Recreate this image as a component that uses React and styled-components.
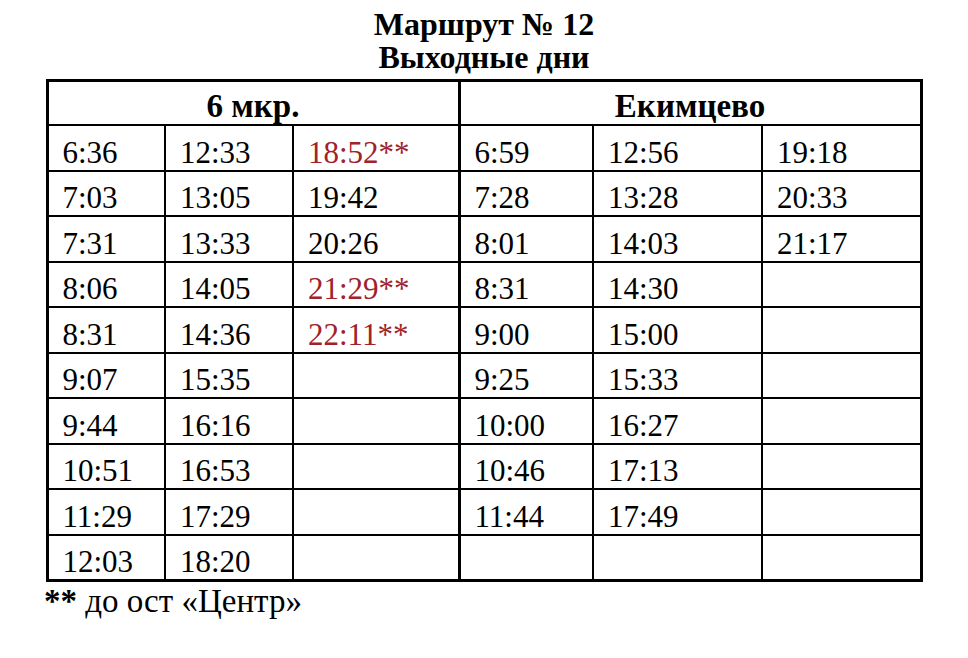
import styled, { createGlobalStyle } from "styled-components";

const GlobalStyle = createGlobalStyle`
  html, body {
    margin: 0;
    padding: 0;
    background: #ffffff;
  }
  body {
    font-family: "Liberation Serif", "Times New Roman", serif;
    color: #000;
  }
`;

const left = [
  ["6:36", "12:33", "18:52**"],
  ["7:03", "13:05", "19:42"],
  ["7:31", "13:33", "20:26"],
  ["8:06", "14:05", "21:29**"],
  ["8:31", "14:36", "22:11**"],
  ["9:07", "15:35", ""],
  ["9:44", "16:16", ""],
  ["10:51", "16:53", ""],
  ["11:29", "17:29", ""],
  ["12:03", "18:20", ""],
];

const right = [
  ["6:59", "12:56", "19:18"],
  ["7:28", "13:28", "20:33"],
  ["8:01", "14:03", "21:17"],
  ["8:31", "14:30", ""],
  ["9:00", "15:00", ""],
  ["9:25", "15:33", ""],
  ["10:00", "16:27", ""],
  ["10:46", "17:13", ""],
  ["11:44", "17:49", ""],
  ["", "", ""],
];

const colWidths = [118, 128, 166, 134, 169, 159];

const Page = styled.div`
  width: 968px;
  height: 658px;
  display: flex;
  flex-direction: column;
  align-items: center;
  padding-top: 8px;
  box-sizing: border-box;
`;

const Title = styled.h1`
  margin: 0;
  font-size: 32px;
  line-height: 33px;
  font-weight: 700;
  text-align: center;
`;

const Table = styled.table`
  border-collapse: collapse;
  table-layout: fixed;
  width: 874px;
  margin-top: 5px;
  border: 3px solid #000;
`;

const HeadCell = styled.th`
  height: 42px;
  padding: 0;
  font-size: 33px;
  font-weight: 700;
  text-align: center;
  vertical-align: bottom;
  line-height: 36px;
  border-left: ${(p) => (p.$split ? "3px" : "2px")} solid #000;
  border-bottom: 2px solid #000;
`;

const Cell = styled.td`
  height: 43.5px;
  padding: 0 0 0 14px;
  font-size: 31px;
  line-height: 34px;
  text-align: left;
  vertical-align: bottom;
  white-space: nowrap;
  color: ${(p) => (p.$marked ? "#a0222a" : "#000")};
  border-left: ${(p) => (p.$split ? "3px" : "2px")} solid #000;
  border-top: 2px solid #000;
`;

const Note = styled.div`
  align-self: flex-start;
  margin-left: 44px;
  margin-top: 2px;
  font-size: 33px;
  line-height: 34px;
  b {
    font-weight: 700;
  }
`;

export default function App() {
  return (
    <Page>
      <GlobalStyle />
      <Title>
        Маршрут № 12
        <br />
        Выходные дни
      </Title>
      <Table>
        <colgroup>
          {colWidths.map((w, i) => (
            <col key={i} style={{ width: w }} />
          ))}
        </colgroup>
        <thead>
          <tr>
            <HeadCell colSpan={3}>6 мкр.</HeadCell>
            <HeadCell colSpan={3} $split>
              Екимцево
            </HeadCell>
          </tr>
        </thead>
        <tbody>
          {left.map((row, r) => (
            <tr key={r}>
              {row.map((t, c) => (
                <Cell key={"l" + c} $marked={t.includes("**")}>
                  {t}
                </Cell>
              ))}
              {right[r].map((t, c) => (
                <Cell key={"r" + c} $split={c === 0}>
                  {t}
                </Cell>
              ))}
            </tr>
          ))}
        </tbody>
      </Table>
      <Note>
        <b>**</b> до ост «Центр»
      </Note>
    </Page>
  );
}
